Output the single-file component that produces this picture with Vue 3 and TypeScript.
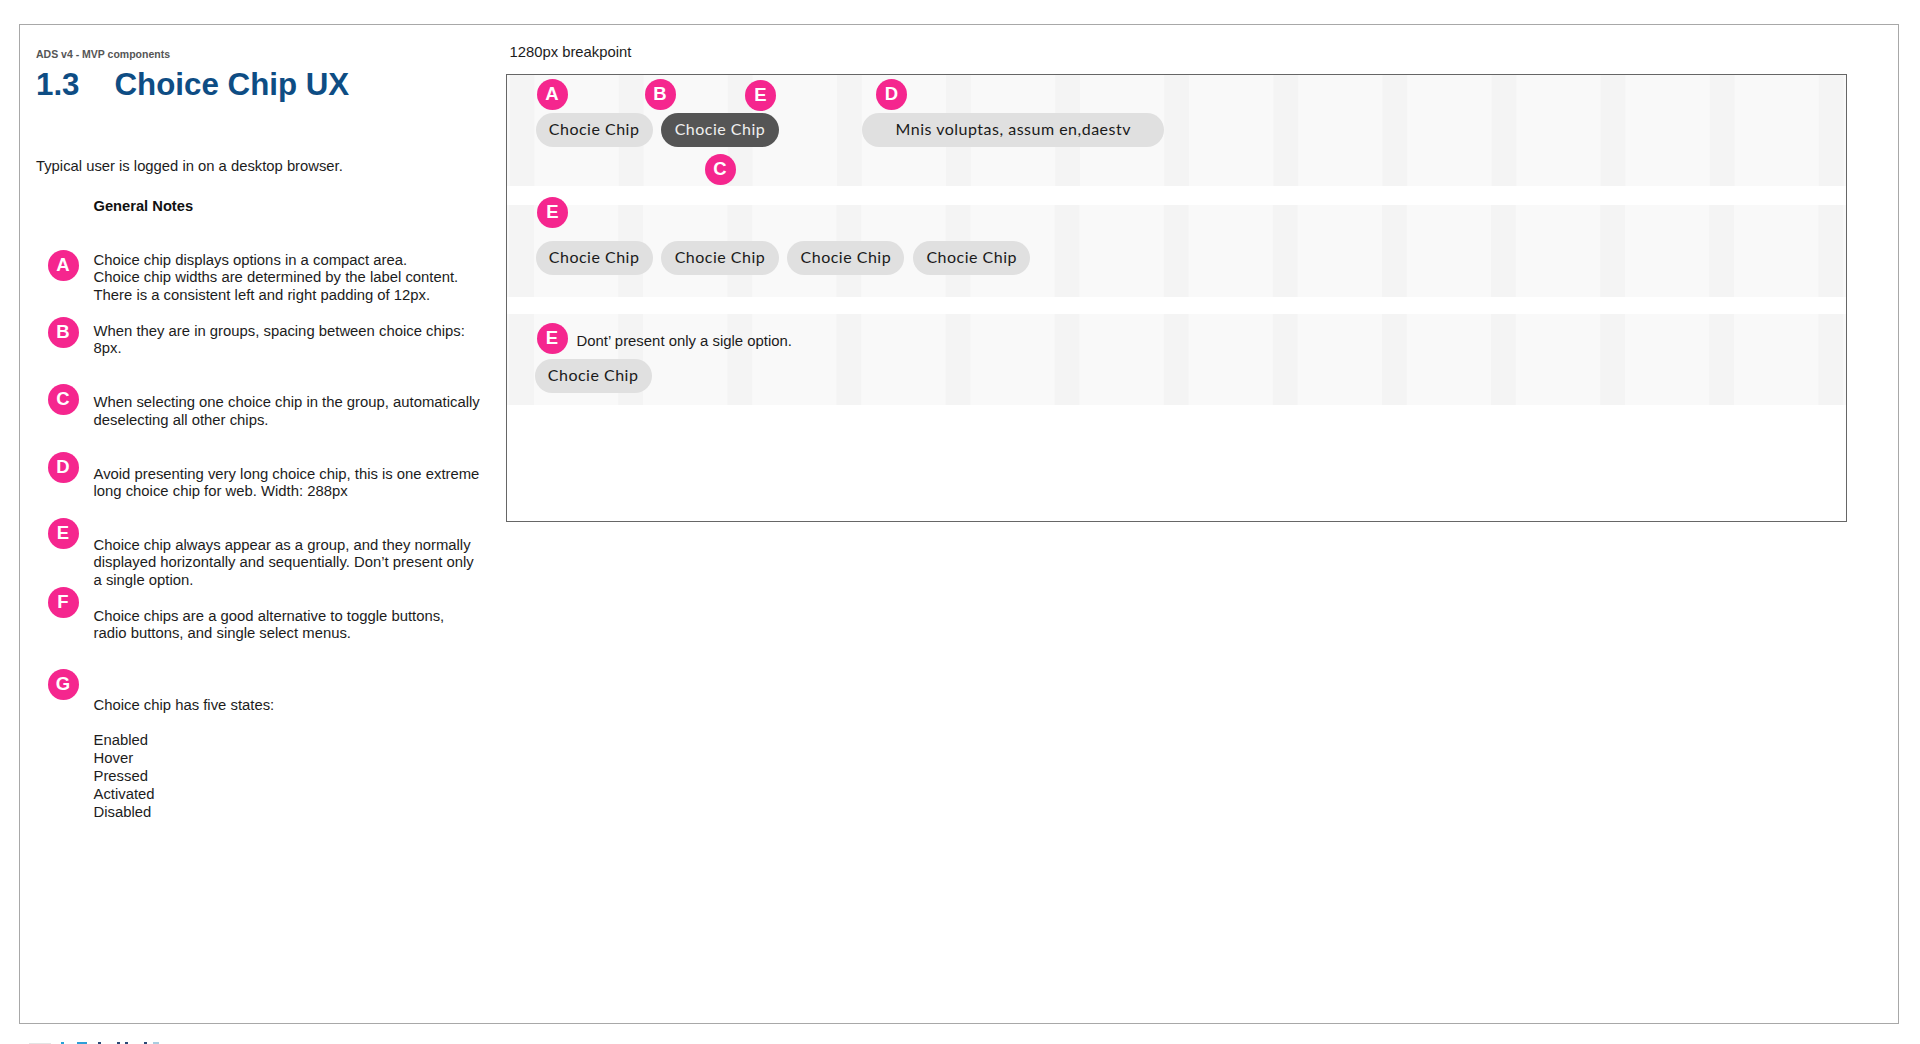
<script setup lang="ts">
interface Note {
  key: string;
  letter: string;
  lines: string[];
}

const notes: Note[] = [
  { key: 'a', letter: 'A', lines: ['Choice chip displays options in a compact area.', 'Choice chip widths are determined by the label content.', 'There is a consistent left and right padding of 12px.'] },
  { key: 'b', letter: 'B', lines: ['When they are in groups, spacing between choice chips:', '8px.'] },
  { key: 'c', letter: 'C', lines: ['When selecting one choice chip in the group, automatically', 'deselecting all other chips.'] },
  { key: 'd', letter: 'D', lines: ['Avoid presenting very long choice chip, this is one extreme', 'long choice chip for web. Width: 288px'] },
  { key: 'e', letter: 'E', lines: ['Choice chip always appear as a group, and they normally', 'displayed horizontally and sequentially. Don’t present only', 'a single option.'] },
  { key: 'f', letter: 'F', lines: ['Choice chips are a good alternative to toggle buttons,', 'radio buttons, and single select menus.'] },
  { key: 'g', letter: 'G', lines: ['Choice chip has five states:', '\u00a0', 'Enabled', 'Hover', 'Pressed', 'Activated', 'Disabled'] },
];

const groupChips: string[] = ['Chocie Chip', 'Chocie Chip', 'Chocie Chip', 'Chocie Chip'];
</script>

<template>
  <div class="page">
    <div class="sheet">
      <aside class="notes">
        <div class="eyebrow">ADS v4 - MVP components</div>
        <h1 class="title"><span class="num">1.3</span><span>Choice Chip UX</span></h1>
        <p class="intro">Typical user is logged in on a desktop browser.</p>
        <h2 class="general">General Notes</h2>
        <div class="list">
          <div v-for="n in notes" :key="n.key" class="note" :class="`note-${n.key}`">
            <span class="pin">{{ n.letter }}</span>
            <div class="note-text">
              <div v-for="(l, i) in n.lines" :key="i">{{ l }}</div>
            </div>
          </div>
        </div>
      </aside>

      <section class="stage">
        <div class="breakpoint">1280px breakpoint</div>
        <div class="frame">
          <div class="band band-one">
            <span class="pin over pin-a">A</span>
            <span class="pin over pin-b">B</span>
            <span class="pin over pin-e">E</span>
            <span class="pin over pin-d">D</span>
            <span class="pin over pin-c">C</span>
            <div class="chips">
              <span class="chip">Chocie Chip</span>
              <span class="chip active">Chocie Chip</span>
              <span class="chip long">Mnis voluptas, assum en,daestv</span>
            </div>
          </div>
          <div class="band band-two">
            <span class="pin">E</span>
            <div class="chips">
              <span v-for="(c, i) in groupChips" :key="i" class="chip">{{ c }}</span>
            </div>
          </div>
          <div class="band band-three">
            <div class="single-note">
              <span class="pin">E</span>
              <span class="single-text">Dont’ present only a sigle option.</span>
            </div>
            <span class="chip">Chocie Chip</span>
          </div>
        </div>
      </section>
    </div>
    <div class="logo-tips" aria-hidden="true">
      <i class="tip grey"></i><i class="tip cyan"></i><i class="tip wide"></i><i class="tip navy"></i>
      <i class="tip navy second"></i><i class="tip navy"></i><i class="tip navy third"></i><i class="tip pale"></i>
    </div>
  </div>
</template>

<style>
html, body { margin: 0; background: #fff; }
</style>

<style scoped>
.page {
  width: 1920px;
  height: 1044px;
  overflow: hidden;
  box-sizing: border-box;
  padding: 24px 0 0 19px;
  background: #fff;
  font-family: "Liberation Sans", Arial, sans-serif;
  color: #1c1c1c;
}
.sheet {
  width: 1880px;
  height: 1000px;
  box-sizing: border-box;
  border: 1.5px solid #a8a8a8;
  display: flex;
}
.notes {
  width: 486px;
  flex: none;
  box-sizing: border-box;
  padding: 23px 0 0 16px;
}
.eyebrow {
  font-size: 10.5px;
  line-height: 13px;
  font-weight: 700;
  color: #555;
}
.title {
  margin: 5.5px 0 0;
  font-size: 31.3px;
  line-height: 36px;
  font-weight: 700;
  color: #0e4d84;
  display: flex;
}
.num { width: 78.5px; }
.intro {
  margin: 54.5px 0 0;
  font-size: 14.8px;
  line-height: 18px;
}
.general {
  margin: 22px 0 0 57.5px;
  font-size: 14.7px;
  line-height: 18px;
  font-weight: 700;
  color: #111;
}
.list { margin-top: 34.5px; }
.note {
  display: flex;
  gap: 15px;
  padding-left: 11.5px;
  font-size: 14.85px;
  line-height: 17.85px;
}
.note-a { height: 67px; }
.note-b { height: 67px; }
.note-c { height: 68px; }
.note-d { height: 66px; }
.note-e { height: 69px; }
.note-f { height: 82px; }
.note-a .note-text { padding-top: 2px; }
.note-b .note-text { padding-top: 6px; }
.note-c .note-text { padding-top: 10.5px; }
.note-d .note-text { padding-top: 14px; }
.note-e .note-text { padding-top: 19px; }
.note-f .note-text { padding-top: 21px; }
.note-g .note-text { padding-top: 28px; }
.note-text { white-space: nowrap; }

.pin {
  width: 31px;
  height: 31px;
  flex: none;
  border-radius: 50%;
  background: #f5268e;
  color: #fff;
  font-family: "Liberation Sans", Arial, sans-serif;
  font-size: 18.5px;
  font-weight: 700;
  display: flex;
  align-items: center;
  justify-content: center;
  line-height: 1;
}
.pin.over { position: absolute; }
.pin-a { left: 29.5px; top: 3.5px; }
.pin-b { left: 137.5px; top: 3.5px; }
.pin-e { left: 238px; top: 4.5px; }
.pin-d { left: 369px; top: 3.5px; }
.pin-c { left: 197.5px; top: 79px; }

.stage {
  flex: 1;
  padding-top: 18px;
}
.breakpoint {
  margin-left: 3.5px;
  font-size: 14.8px;
  line-height: 18px;
  color: #1c1c1c;
}
.frame {
  width: 1341px;
  height: 448px;
  margin-top: 12.5px;
  box-sizing: border-box;
  border: 1.5px solid #666;
}
.band {
  box-sizing: border-box;
  background-color: #f9f9f9;
  background-image: linear-gradient(to right, #f9f9f9 0, #f9f9f9 84px, #f4f4f4 84px, #f4f4f4 100%);
  background-size: 109.1px 100%;
  background-position: 27.5px 0;
  padding-left: 28.5px;
}
.band-one {
  position: relative;
  height: 110.5px;
  margin-top: 0.5px;
  padding-top: 38px;
}
.band-two {
  height: 92px;
  margin-top: 19.5px;
  padding-top: 0;
  padding-left: 30px;
  background-position: 27px 0;
}
.band-two .chips { margin-top: 13px; margin-left: -1.5px; }
.band-two > .pin { position: relative; top: -8px; margin-bottom: -8px; }
.band-three {
  height: 91px;
  margin-top: 17px;
  padding: 9px 0 0 27.5px;
  background-position: 27px 0;
}
.chips {
  display: flex;
  gap: 8.7px;
}
.chip {
  display: inline-flex;
  align-items: center;
  justify-content: center;
  box-sizing: border-box;
  width: 117.2px;
  height: 33.5px;
  padding-bottom: 2px;
  border-radius: 17px;
  background: #e0e0e0;
  color: #1a1a1a;
  font-family: Lato, "Liberation Sans", sans-serif;
  font-size: 16px;
  letter-spacing: 0.5px;
  white-space: nowrap;
}
.chip.active {
  background: #555;
  color: #f0f0f0;
}
.chip.long {
  width: 302px;
  margin-left: 75px;
}
.single-note {
  display: flex;
  align-items: center;
  gap: 9px;
  margin-left: 2px;
  margin-bottom: 5px;
  height: 31px;
}
.single-text {
  font-size: 14.9px;
  line-height: 18px;
  position: relative;
  top: 2.5px;
  white-space: nowrap;
}
.logo-tips {
  display: flex;
  align-items: flex-end;
  height: 3px;
  margin: 17px 0 0 10px;
}
.tip { display: block; height: 2px; width: 3px; margin-right: 16px; }
.tip.grey { width: 22px; height: 1px; background: #e4e4e4; margin-right: 10px; }
.tip.cyan { background: #27a3d8; margin-right: 13px; }
.tip.wide { width: 10px; background: #2f9fd8; margin-right: 11px; }
.tip.navy { background: #2b4a78; }
.tip.second { margin-right: 5px; }
.tip.third { margin-right: 6px; }
.tip.pale { width: 6px; background: #a9cde0; }
</style>
